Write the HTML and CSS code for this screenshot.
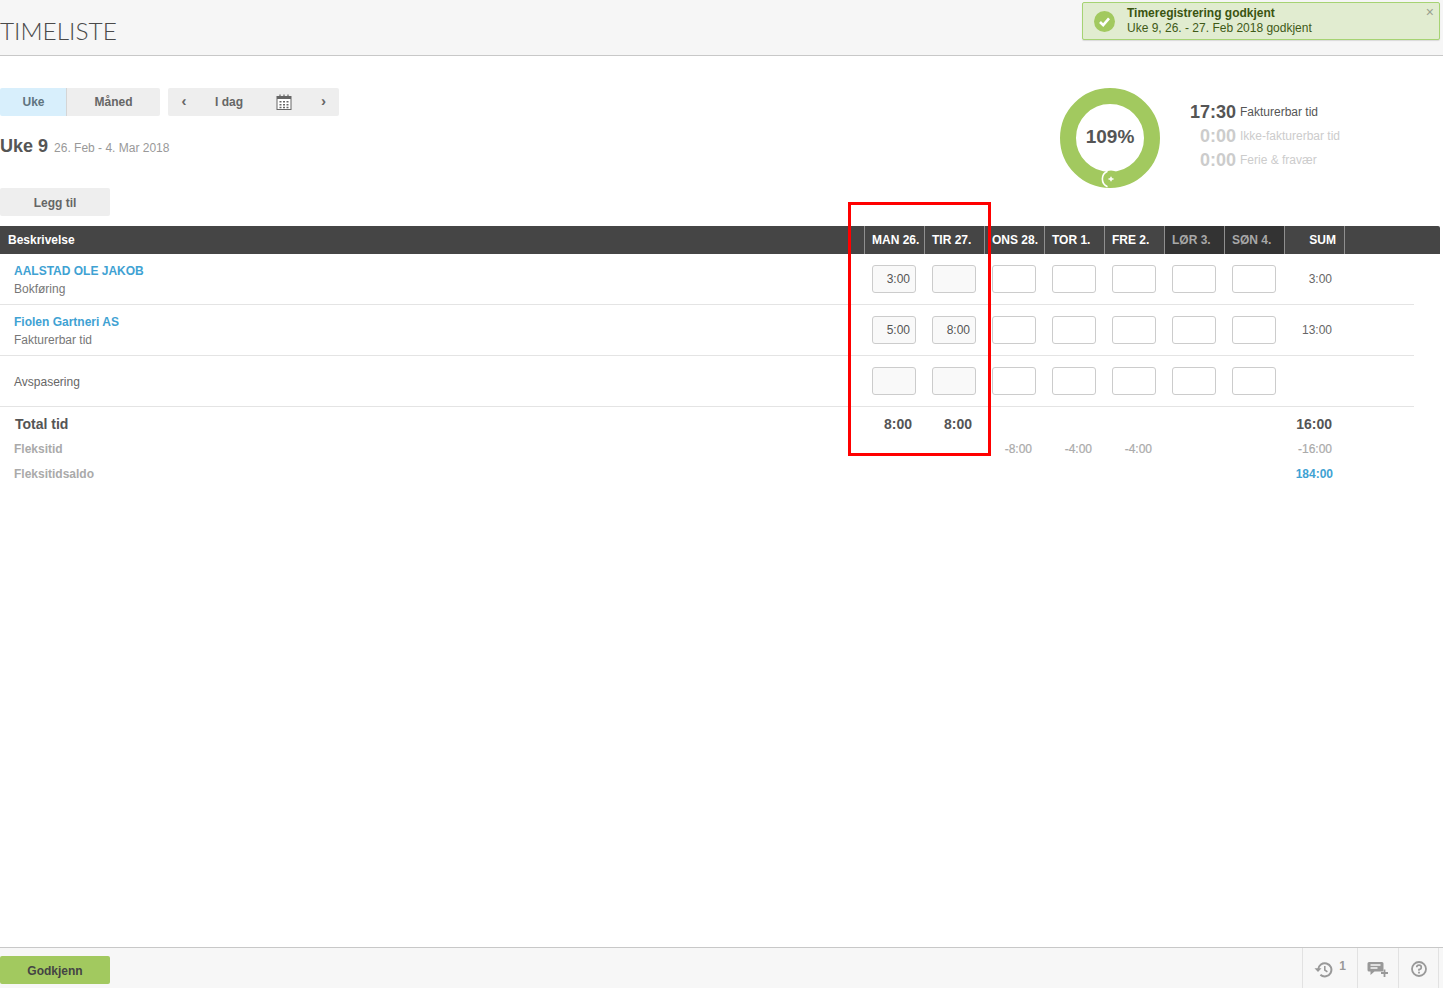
FILE: index.html
```html
<!DOCTYPE html>
<html lang="no">
<head>
<meta charset="utf-8">
<title>Timeliste</title>
<link rel="stylesheet" href="styles.css">
</head>
<body>
<header class="topbar">
  <h1 class="title">TIMELISTE</h1>
  <div class="toast">
    <svg class="toast-icon" width="21" height="21" viewBox="0 0 21 21"><circle cx="10.5" cy="10.5" r="10.5" fill="#a2c95f"/><path d="M6 11l3.2 3.2L15 7.4" fill="none" stroke="#fff" stroke-width="2.6"/></svg>
    <div class="toast-text">
      <div class="toast-title">Timeregistrering godkjent</div>
      <div>Uke 9, 26. - 27. Feb 2018 godkjent</div>
    </div>
    <span class="toast-close">×</span>
  </div>
</header>

<main class="main">
  <section class="summary">
    <div class="summary-left">
      <div class="toolbar">
        <div class="segmented">
          <span class="seg seg-active">Uke</span>
          <span class="seg seg-month">Måned</span>
        </div>
        <div class="datenav">
          <span class="nav-arrow">‹</span>
          <span class="nav-today">I dag</span>
          <svg class="nav-cal" width="16" height="16" viewBox="0 0 16 16">
            <rect x="1" y="2.5" width="14" height="13" fill="#fff" stroke="#666"/>
            <rect x="1" y="2" width="14" height="3" fill="#666"/>
            <path d="M4 0.5v3M8 0.5v3M12 0.5v3" stroke="#666" stroke-width="1.2"/>
            <path d="M3.5 7h2v1.5h-2zM7 7h2v1.5H7zM10.5 7h2v1.5h-2zM3.5 10h2v1.5h-2zM7 10h2v1.5H7zM10.5 10h2v1.5h-2zM3.5 12.8h2v1.4h-2zM7 12.8h2v1.4H7zM10.5 12.8h2v1.4h-2z" fill="#666"/>
          </svg>
          <span class="nav-arrow nav-next">›</span>
        </div>
      </div>
      <div class="week"><span class="week-no">Uke 9</span><span class="week-range">26. Feb - 4. Mar 2018</span></div>
      <span class="add-btn">Legg til</span>
    </div>
    <div class="donut">
      <svg width="100" height="100" viewBox="0 0 100 100">
        <circle cx="50" cy="50" r="42" fill="none" stroke="#a2c95f" stroke-width="16"/>
        <circle cx="51" cy="91" r="8.5" fill="#a2c95f"/>
        <path d="M47.5 83.2A8.5 8.5 0 0 0 47.5 98.8" fill="none" stroke="#fff" stroke-width="1.6"/>
        <path d="M48.5 91h5M51 88.8v4.4" stroke="#fff" stroke-width="1.5"/>
      </svg>
      <span class="donut-label">109%</span>
    </div>
    <div class="stats">
      <div class="stat"><b class="stat-val">17:30</b><span class="stat-label">Fakturerbar tid</span></div>
      <div class="stat stat-off"><b class="stat-val">0:00</b><span class="stat-label">Ikke-fakturerbar tid</span></div>
      <div class="stat stat-off"><b class="stat-val">0:00</b><span class="stat-label">Ferie &amp; fravær</span></div>
    </div>
  </section>

  <section class="sheet">
    <div class="grid head">
      <div class="hcell hdesc">Beskrivelse</div>
      <div class="hcell">MAN 26.</div>
      <div class="hcell">TIR 27.</div>
      <div class="hcell">ONS 28.</div>
      <div class="hcell">TOR 1.</div>
      <div class="hcell">FRE 2.</div>
      <div class="hcell weekend">LØR 3.</div>
      <div class="hcell weekend">SØN 4.</div>
      <div class="hcell hsum">SUM</div>
      <div class="hfill"></div>
    </div>

    <div class="grid row">
      <div class="desc"><a class="client">AALSTAD OLE JAKOB</a><span class="task">Bokføring</span></div>
      <div class="day"><div class="cell locked">3:00</div></div>
      <div class="day"><div class="cell locked"></div></div>
      <div class="day"><div class="cell"></div></div>
      <div class="day"><div class="cell"></div></div>
      <div class="day"><div class="cell"></div></div>
      <div class="day"><div class="cell"></div></div>
      <div class="day"><div class="cell"></div></div>
      <div class="rowsum">3:00</div>
    </div>
    <div class="grid row">
      <div class="desc"><a class="client">Fiolen Gartneri AS</a><span class="task">Fakturerbar tid</span></div>
      <div class="day"><div class="cell locked">5:00</div></div>
      <div class="day"><div class="cell locked">8:00</div></div>
      <div class="day"><div class="cell"></div></div>
      <div class="day"><div class="cell"></div></div>
      <div class="day"><div class="cell"></div></div>
      <div class="day"><div class="cell"></div></div>
      <div class="day"><div class="cell"></div></div>
      <div class="rowsum">13:00</div>
    </div>
    <div class="grid row">
      <div class="desc"><span class="task task-solo">Avspasering</span></div>
      <div class="day"><div class="cell locked"></div></div>
      <div class="day"><div class="cell locked"></div></div>
      <div class="day"><div class="cell"></div></div>
      <div class="day"><div class="cell"></div></div>
      <div class="day"><div class="cell"></div></div>
      <div class="day"><div class="cell"></div></div>
      <div class="day"><div class="cell"></div></div>
      <div class="rowsum"></div>
    </div>

    <div class="grid totals total-main">
      <div class="tlabel">Total tid</div>
      <div class="tval">8:00</div>
      <div class="tval">8:00</div>
      <div class="tval"></div>
      <div class="tval"></div>
      <div class="tval"></div>
      <div class="tval"></div>
      <div class="tval"></div>
      <div class="tval tsum">16:00</div>
    </div>
    <div class="grid totals total-sub">
      <div class="tlabel">Fleksitid</div>
      <div class="tval"></div>
      <div class="tval"></div>
      <div class="tval">-8:00</div>
      <div class="tval">-4:00</div>
      <div class="tval">-4:00</div>
      <div class="tval"></div>
      <div class="tval"></div>
      <div class="tval tsum">-16:00</div>
    </div>
    <div class="grid totals total-sub">
      <div class="tlabel">Fleksitidsaldo</div>
      <div class="tval"></div>
      <div class="tval"></div>
      <div class="tval"></div>
      <div class="tval"></div>
      <div class="tval"></div>
      <div class="tval"></div>
      <div class="tval"></div>
      <div class="tval tsum balance">184:00</div>
    </div>
    <div class="highlight"></div>
  </section>
</main>

<footer class="footer">
  <span class="approve">Godkjenn</span>
  <div class="tools">
    <div class="tool tool-history">
      <svg width="19" height="17" viewBox="0 0 19 17"><path d="M4.2 8.5a6.6 6.6 0 1 1 2.2 5.2" fill="none" stroke="#999" stroke-width="2"/><path d="M0.5 7.2h7l-3.5 3.8z" fill="#999"/><path d="M10.8 5v4l2.6 1.8" fill="none" stroke="#999" stroke-width="1.6"/></svg>
      <sup class="tool-count">1</sup>
    </div>
    <div class="tool tool-comment">
      <svg width="22" height="17" viewBox="0 0 22 17"><path d="M2 1h13a1.5 1.5 0 0 1 1.500 1.500V9A1.500 1.500 0 0 1 15 10.500H7.500L3.500 14v-3.500H2A1.500 1.500 0 0 1 .5 9V2.500A1.500 1.500 0 0 1 2 1z" fill="#999"/><path d="M3.500 4h10M3.500 7h7" stroke="#f7f7f7" stroke-width="1.300"/><path d="M14 12h7M17.500 8.500v7.500" stroke="#999" stroke-width="1.800"/></svg>
    </div>
    <div class="tool tool-help">
      <svg width="16" height="16" viewBox="0 0 16 16"><circle cx="8" cy="8" r="7" fill="none" stroke="#999" stroke-width="1.800"/><path d="M5.700 6.200A2.300 2.200 0 1 1 8 8.500v1.200" fill="none" stroke="#999" stroke-width="1.700"/><rect x="7.100" y="10.700" width="1.800" height="1.800" fill="#999"/></svg>
    </div>
  </div>
</footer>
</body>
</html>
```

FILE: styles.css
```css
* { box-sizing: border-box; }
html, body { height: 100%; }
body {
  margin: 0;
  height: 988px;
  overflow: hidden;
  display: flex;
  flex-direction: column;
  background: #fff;
  color: #555;
  font: 12px/1.2 "Liberation Sans", Arial, sans-serif;
}

/* top bar */
.topbar {
  height: 56px;
  flex: none;
  position: relative;
  background: #f6f6f6;
  border-bottom: 1px solid #c8c8c8;
  display: flex;
  align-items: flex-end;
}
.title {
  margin: 0 0 9px;
  font: 300 24.4px/30px Lato, sans-serif;
  color: #4a4a4a;
}
.toast {
  position: absolute;
  left: 1082px;
  top: 2px;
  width: 358px;
  height: 38px;
  display: flex;
  align-items: center;
  background: #e1ecd0;
  border: 1px solid #a6d373;
  border-radius: 2px;
  box-shadow: 0 1px 1px rgba(0,0,0,.12);
  color: #3f5a17;
  padding-left: 11px;
}
.toast-icon { flex: none; }
.toast-text { margin-left: 12px; line-height: 15px; }
.toast-title { font-weight: 700; color: #3a5410; }
.toast-close {
  position: absolute;
  right: 5px;
  top: 3px;
  font-size: 14px;
  line-height: 12px;
  color: #9aa08f;
}

/* main */
.main { flex: 1; min-height: 0; }
.summary { height: 170px; display: flex; }
.summary-left { width: 1060px; padding-top: 32px; }
.toolbar { display: flex; gap: 8px; height: 28px; }
.segmented { display: flex; width: 160px; }
.seg {
  display: flex;
  align-items: center;
  justify-content: center;
  font-weight: 700;
  color: #666;
  background: #eeeeee;
  border-radius: 0 2px 2px 0;
}
.seg-active {
  width: 67px;
  padding-left: 1px;
  color: #5f7480;
  background: #d8effc;
  border-right: 1px solid #d5d5d5;
  border-radius: 2px 0 0 2px;
}
.seg-month { width: 93px; }
.datenav {
  width: 171px;
  display: flex;
  align-items: center;
  background: #eeeeee;
  border-radius: 2px;
  font-weight: 700;
  color: #666;
}
.nav-arrow { width: 32px; text-align: center; font-size: 15px; line-height: 16px; padding-bottom: 3px; }
.nav-today { width: 58px; text-align: center; }
.nav-cal { margin-left: 18px; margin-top: -1px; }
.nav-next { margin-left: 15px; padding-left: 1px; }
.week { margin-top: 20px; height: 21px; display: flex; align-items: baseline; }
.week-no { font-size: 18px; font-weight: 700; line-height: 21px; color: #555; }
.week-range { margin-left: 6px; color: #999; }
.add-btn {
  display: flex;
  align-items: center;
  justify-content: center;
  width: 110px;
  height: 28px;
  margin-top: 31px;
  padding-top: 2px;
  background: #eeeeee;
  border-radius: 2px;
  font-weight: 700;
  color: #666;
}
.donut {
  position: relative;
  flex: none;
  width: 100px;
  height: 100px;
  margin-top: 32px;
}
.donut svg { display: block; }
.donut-label {
  position: absolute;
  inset: 0 0 2px 0;
  display: flex;
  align-items: center;
  justify-content: center;
  font-size: 19px;
  font-weight: 700;
  color: #555;
}
.stats { margin: 44px 0 0 30px; }
.stat { display: flex; align-items: center; height: 24px; color: #555; }
.stat-val { width: 46px; text-align: right; font-size: 18px; line-height: 24px; }
.stat-label { margin-left: 4px; }
.stat-off { color: #ccc; }

/* sheet */
.sheet { position: relative; }
.grid {
  display: grid;
  grid-template-columns: 864px repeat(8, 60px) 1fr;
}
.head {
  width: 1440px;
  height: 28px;
  background: #454545;
  border-radius: 0 2px 0 0;
}
.hcell {
  display: flex;
  align-items: center;
  padding-left: 7px;
  font-weight: 700;
  color: #fff;
  border-left: 1px solid #8f8f8f;
  white-space: nowrap;
}
.hfill { border-left: 1px solid #8f8f8f; }
.hcell.hdesc { padding-left: 8px; border-left: 0; }
.hcell.weekend { background: #333; color: #a8a8a8; }
.hcell.hsum { justify-content: flex-end; padding: 0 8px 0 0; }
.row {
  width: 1414px;
  height: 51px;
  border-bottom: 1px solid #e4e4e4;
  align-items: center;
}
.desc { padding: 2px 0 0 14px; display: flex; flex-direction: column; }
.client { font-weight: 700; color: #3fa2d3; line-height: 17px; }
.task { color: #777; line-height: 18px; }
.task-solo { color: #666; margin-top: -1px; }
.day { padding-left: 8px; }
.cell {
  width: 44px;
  height: 28px;
  border: 1px solid #ccc;
  border-radius: 3px;
  background: #fff;
  text-align: right;
  padding-right: 5px;
  line-height: 26px;
  color: #555;
}
.cell.locked { background: #f9f9f9; }
.rowsum { text-align: right; padding-right: 12px; color: #666; }
.totals { width: 1414px; height: 25px; align-items: center; }
.total-main { height: 30px; padding-top: 5px; color: #555; font-weight: 700; }
.total-main .tlabel { font-size: 14px; padding-left: 15px; }
.total-main .tval { font-size: 14px; }
.total-sub { color: #aaa; font-weight: 700; }
.tlabel { padding-left: 14px; }
.tval { text-align: right; padding-right: 12px; }
.total-sub .tval { font-weight: 400; -webkit-text-stroke: .2px #aaa; }
.total-sub .balance { color: #3fa2d3; font-weight: 700; -webkit-text-stroke: 0; padding-right: 11px; }
.highlight {
  position: absolute;
  left: 848px;
  top: -24px;
  width: 143px;
  height: 254px;
  border: 3px solid #f00;
  pointer-events: none;
}

/* footer */
.footer {
  flex: none;
  height: 41px;
  display: flex;
  justify-content: space-between;
  background: #f7f7f7;
  border-top: 1px solid #c8c8c8;
}
.approve {
  display: flex;
  align-items: center;
  justify-content: center;
  width: 110px;
  height: 28px;
  margin-top: 8px;
  padding-top: 2px;
  background: #a2c95f;
  border-radius: 2px;
  font-weight: 700;
  color: #444;
}
.tools { display: flex; margin-right: 4px; }
.tool {
  display: flex;
  align-items: center;
  justify-content: center;
  border-left: 1px solid #e2e2e2;
  color: #999;
}
.tool svg { display: block; margin-top: 2px; }
.tool-history { width: 55px; }
.tool-comment { width: 41px; }
.tool-help { width: 41px; border-right: 1px solid #e2e2e2; }
.tool-count { font-weight: 700; font-size: 12px; margin: -5px 0 0 6px; line-height: 14px; }
```
